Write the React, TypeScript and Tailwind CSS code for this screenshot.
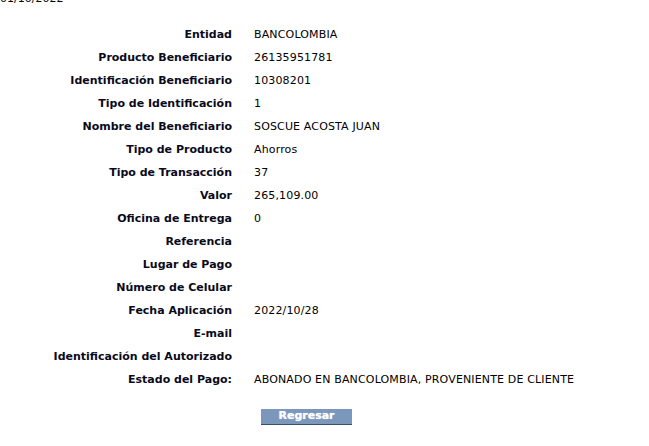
import React from 'react';

const rows: { label: string; value: string }[] = [
  { label: 'Entidad', value: 'BANCOLOMBIA' },
  { label: 'Producto Beneficiario', value: '26135951781' },
  { label: 'Identificación Beneficiario', value: '10308201' },
  { label: 'Tipo de Identificación', value: '1' },
  { label: 'Nombre del Beneficiario', value: 'SOSCUE ACOSTA JUAN' },
  { label: 'Tipo de Producto', value: 'Ahorros' },
  { label: 'Tipo de Transacción', value: '37' },
  { label: 'Valor', value: '265,109.00' },
  { label: 'Oficina de Entrega', value: '0' },
  { label: 'Referencia', value: '' },
  { label: 'Lugar de Pago', value: '' },
  { label: 'Número de Celular', value: '' },
  { label: 'Fecha Aplicación', value: '2022/10/28' },
  { label: 'E-mail', value: '' },
  { label: 'Identificación del Autorizado', value: '' },
  { label: 'Estado del Pago:', value: 'ABONADO EN BANCOLOMBIA, PROVENIENTE DE CLIENTE' },
];

export default function App() {
  return (
    <div className="w-[649px] h-[446px] overflow-hidden bg-white text-[11px] text-black font-['DejaVu_Sans',Verdana,sans-serif]">
      {/* page is scrolled: only the bottom of the date line shows */}
      <div className="-mt-[8px] h-[14px] leading-[14px]">01/10/2022</div>

      <div className="mt-[17px] grid grid-cols-[232px_1fr] gap-x-[22px]">
        {rows.map(r => (
          <React.Fragment key={r.label}>
            <div className="h-[23px] leading-[23px] text-right font-bold text-[#0a0a1a] whitespace-nowrap">{r.label}</div>
            <div className="h-[23px] leading-[23px] whitespace-nowrap tracking-[0.15px]">{r.value}</div>
          </React.Fragment>
        ))}
      </div>

      <div className="mt-[17px] pl-[261px]">
        <button className="w-[91px] h-[16px] bg-[#7b97bb] border-b border-[#3d4f6b] text-white font-bold text-[11px] leading-[14px] [text-shadow:0_0_1px_#dfe6f2]">
          Regresar
        </button>
      </div>
    </div>
  );
}
